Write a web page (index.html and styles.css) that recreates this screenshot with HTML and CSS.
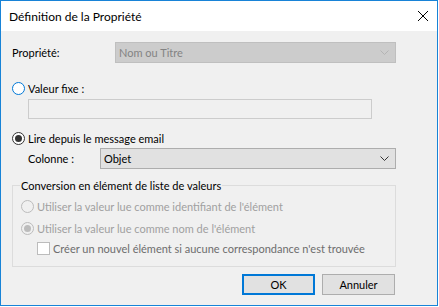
FILE: index.html
```html
<!DOCTYPE html>
<html lang="fr">
<head>
    <meta charset="UTF-8">
    <title>Définition de la Propriété</title>
    <link rel="stylesheet" href="styles.css">
</head>
<body>
    <div class="window">
        <div class="titlebar">
            <span class="title">Définition de la Propriété</span>
            <svg class="close" width="10" height="10" viewBox="0 0 10 10">
                <path d="M0 0 L10 10 M10 0 L0 10" stroke="#000" stroke-width="1" fill="none"/>
            </svg>
        </div>
        <div class="content">
            <div class="row field-row">
                <span class="label-prop">Propriété:</span>
                <div class="select disabled">
                    <span>Nom ou Titre</span>
                    <svg width="9" height="5" viewBox="0 0 9 5"><polyline points="0.5,0.5 4.5,4.5 8.5,0.5" stroke="#b4b4b4" fill="none"/></svg>
                </div>
            </div>

            <div class="row radio-row r-fixed">
                <span class="radio focus"></span>
                <span>Valeur fixe :</span>
            </div>
            <div class="textbox"></div>

            <div class="row radio-row r-email">
                <span class="radio checked"></span>
                <span>Lire depuis le message email</span>
            </div>
            <div class="row field-row col-row">
                <span class="label-col">Colonne :</span>
                <div class="select">
                    <span>Objet</span>
                    <svg width="9" height="5" viewBox="0 0 9 5"><polyline points="0.5,0.5 4.5,4.5 8.5,0.5" stroke="#333" fill="none"/></svg>
                </div>
            </div>

            <fieldset class="group">
                <legend>Conversion en élément de liste de valeurs</legend>
                <div class="row radio-row muted">
                    <span class="radio disabled"></span>
                    <span>Utiliser la valeur lue comme identifiant de l'élément</span>
                </div>
                <div class="row radio-row muted r-name">
                    <span class="radio disabled checked"></span>
                    <span>Utiliser la valeur lue comme nom de l'élément</span>
                </div>
                <div class="row radio-row check-row">
                    <span class="checkbox"></span>
                    <span>Créer un nouvel élément si aucune correspondance n'est trouvée</span>
                </div>
            </fieldset>

            <div class="buttons">
                <button class="btn default">OK</button>
                <button class="btn">Annuler</button>
            </div>
        </div>
    </div>
</body>
</html>
```

FILE: styles.css
```css
body {
    margin: 0;
    background: #fff;
    font-family: Lato, "Noto Sans", sans-serif;
    font-size: 11px;
    color: #000;
}
.window {
    width: 436px;
    height: 304px;
    border: 1px solid #1883d7;
    background: #f0f0f0;
    display: flex;
    flex-direction: column;
}
.titlebar {
    height: 30px;
    background: #fff;
    display: flex;
    align-items: center;
    justify-content: space-between;
    padding: 0 9px 0 8px;
    flex-shrink: 0;
}
.title {
    font-size: 12px;
}
.content {
    padding: 11px 0 0 11px;
    width: 384px;
}
.row {
    display: flex;
    align-items: center;
    white-space: nowrap;
}
.field-row {
    height: 21px;
}
.label-prop {
    width: 103px;
}
.label-col {
    width: 72px;
}
.col-row {
    padding-left: 16px;
    margin-top: 1px;
}
.select {
    flex: 1;
    height: 21px;
    box-sizing: border-box;
    border: 1px solid #adadad;
    background: #e1e1e1;
    display: flex;
    align-items: center;
    justify-content: space-between;
    padding: 0 6px 0 3px;
}
.select.disabled {
    background: #cccccc;
    border-color: #bfbfbf;
    color: #838383;
}
.radio-row {
    height: 17px;
    gap: 3px;
}
.r-fixed {
    margin-top: 17px;
}
.r-email {
    margin-top: 11px;
}
.radio {
    width: 13px;
    height: 13px;
    box-sizing: border-box;
    border: 1px solid #333;
    border-radius: 50%;
    background: #fff;
    display: flex;
    align-items: center;
    justify-content: center;
    flex-shrink: 0;
}
.radio.focus {
    border-color: #0078d7;
}
.radio.checked::after {
    content: "";
    width: 7px;
    height: 7px;
    border-radius: 50%;
    background: #333;
}
.radio.disabled {
    border-color: #bcbcbc;
    background: #f0f0f0;
}
.radio.disabled.checked::after {
    background: #bcbcbc;
}
.textbox {
    margin: 2px 0 0 16px;
    width: 344px;
    height: 20px;
    box-sizing: border-box;
    border: 1px solid #cccccc;
    background: #f0f0f0;
}
.group {
    margin: 9px 0 0;
    padding: 5px 8px 9px;
    border: 1px solid #dcdcdc;
    width: 384px;
    box-sizing: border-box;
    min-width: 0;
}
.group legend {
    padding: 0 1px;
    margin-left: -1px;
    line-height: 15px;
}
.muted {
    color: #a0a0a0;
}
.r-name {
    margin-top: 5px;
}
.check-row {
    margin-top: 3px;
    padding-left: 16px;
    color: #6d6d6d;
}
.checkbox {
    width: 13px;
    height: 13px;
    box-sizing: border-box;
    border: 1px solid #bcbcbc;
    background: #fff;
    flex-shrink: 0;
}
.buttons {
    margin-top: 7px;
    display: flex;
    justify-content: flex-end;
    gap: 7px;
    padding-right: 1px;
}
.btn {
    width: 73px;
    height: 21px;
    box-sizing: border-box;
    border: 1px solid #adadad;
    background: #e1e1e1;
    font-family: inherit;
    font-size: 11px;
    color: #000;
    padding: 0;
}
.btn.default {
    border: 2px solid #0078d7;
}
```
